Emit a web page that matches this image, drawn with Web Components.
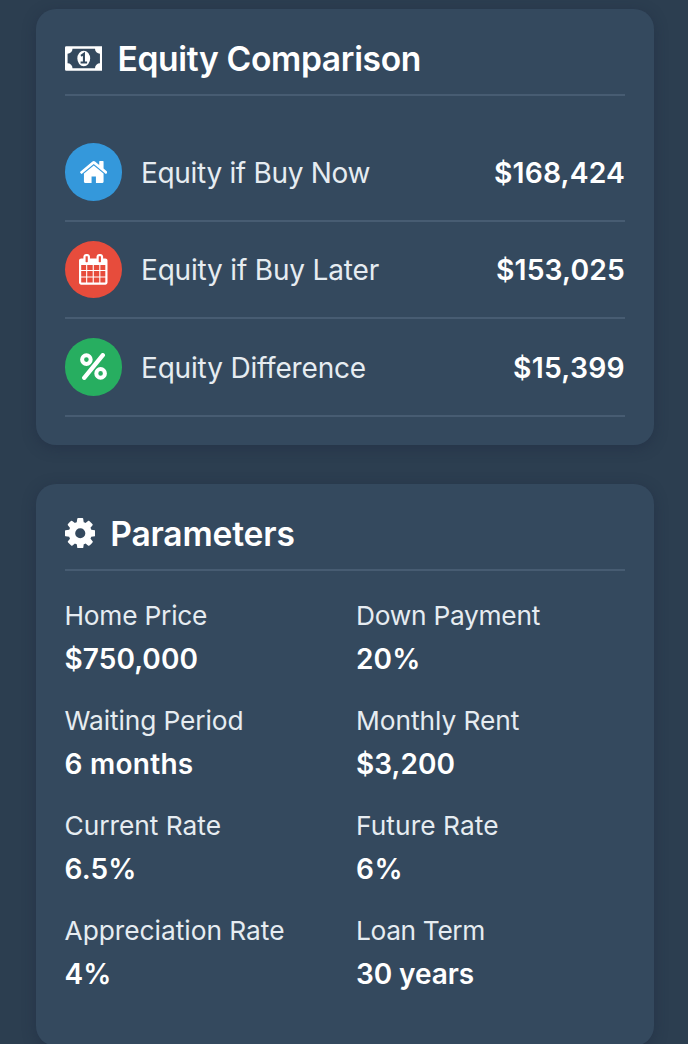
<!DOCTYPE html>
<html lang="en">
<head>
<meta charset="utf-8">
<title>Equity Comparison</title>
<style>
html{background:#2c3e50}
body{margin:0;height:1044px;overflow:hidden;background:#2c3e50;font-family:Inter,"Liberation Sans",sans-serif;color:#fff}
</style>
</head>
<body>
<equity-app></equity-app>
<script>
const ICONS = {
  money: `<svg viewBox="0 0 38 25"><path fill="currentColor" fill-rule="evenodd" d="M1.3 0H36.7Q38 0 38 1.3V23.7Q38 25 36.7 25H1.3Q0 25 0 23.7V1.3Q0 0 1.3 0ZM7.6 2.6A5 5 0 0 1 2.6 7.6V17.4A5 5 0 0 1 7.6 22.4H30.4A5 5 0 0 1 35.4 17.4V7.6A5 5 0 0 1 30.4 2.6Z"/><ellipse cx="19" cy="12.5" rx="6.5" ry="7.9" fill="currentColor"/><path d="M16.2 9.9L19.2 7.8V16.2M15.8 16.6H22.4" fill="none" stroke="#34495e" stroke-width="2.1"/></svg>`,
  cog: `<svg viewBox="128 128 1536 1536"><path fill="currentColor" d="M1152 896q0-106-75-181t-181-75-181 75-75 181 75 181 181 75 181-75 75-181zm512-109v222q0 12-8 23t-20 13l-185 28q-19 54-39 91 35 50 107 138 10 12 10 25t-9 23q-27 37-99 108t-94 71q-12 0-26-9l-138-108q-44 23-91 38-16 136-29 186-7 28-36 28h-222q-14 0-24.5-8.5t-11.5-21.5l-28-184q-49-16-90-37l-141 107q-10 9-25 9-14 0-25-11-126-114-165-168-7-10-7-23 0-12 8-23 15-21 51-66.5t54-70.5q-27-50-41-99l-183-27q-13-2-21-12.5t-8-23.5v-222q0-12 8-23t19-13l186-28q14-46 39-92-40-57-107-138-10-12-10-24 0-10 9-23 26-36 98.5-107.5t94.5-71.5q13 0 26 10l138 107q44-23 91-38 16-136 29-186 7-28 36-28h222q14 0 24.5 8.5t11.5 21.5l28 184q49 16 90 37l142-107q9-9 24-9 13 0 25 10 129 119 165 170 7 8 7 22 0 12-8 23-15 21-51 66.5t-54 70.5q26 50 41 98l183 28q13 2 21 12.5t8 23.5z"/></svg>`,
  home: `<svg viewBox="89 253 1614 1283"><path fill="currentColor" d="M1472 992v480q0 26-19 45t-45 19h-384v-384h-256v384h-384q-26 0-45-19t-19-45v-480q0-1 .5-3t.5-3l575-474 575 474q1 2 1 6zm223-69l-62 74q-8 9-21 11h-3q-13 0-21-7l-692-577-692 577q-12 8-24 7-13-2-21-11l-62-74q-8-10-7-23.5t11-21.5l719-599q32-26 76-26t76 26l244 204v-195q0-14 9-23t23-9h192q14 0 23 9t9 23v408l219 182q10 8 11 21.5t-7 23.5z"/></svg>`,
  calendar: `<svg viewBox="64 0 1664 1792"><path fill="currentColor" d="M192 1664h288v-288h-288v288zm352 0h320v-288h-320v288zm-352-352h288v-320h-288v320zm352 0h320v-320h-320v320zm-352-384h288v-288h-288v288zm736 736h320v-288h-320v288zm-384-736h320v-288h-320v288zm768 736h288v-288h-288v288zm-384-352h320v-320h-320v320zm-352-864v-288q0-13-9.5-22.5t-22.5-9.5h-64q-13 0-22.5 9.5t-9.5 22.5v288q0 13 9.5 22.5t22.5 9.5h64q13 0 22.5-9.5t9.5-22.5zm736 864h288v-320h-288v320zm-384-384h320v-288h-320v288zm384 0h288v-288h-288v288zm32-480v-288q0-13-9.5-22.5t-22.5-9.5h-64q-13 0-22.5 9.5t-9.5 22.5v288q0 13 9.5 22.5t22.5 9.5h64q13 0 22.5-9.5t9.5-22.5zm384-64v1280q0 52-38 90t-90 38h-1408q-52 0-90-38t-38-90v-1280q0-52 38-90t90-38h128v-96q0-66 47-113t113-47h64q66 0 113 47t47 113v96h384v-96q0-66 47-113t113-47h64q66 0 113 47t47 113v96h128q52 0 90 38t38 90z"/></svg>`,
  percent: `<svg viewBox="0 0 27 27"><g fill="none" stroke="currentColor"><circle cx="6.4" cy="6.6" r="4.3" stroke-width="4"/><circle cx="20.6" cy="20.4" r="4.3" stroke-width="4"/><path d="M22.8 2.2L4.2 24.8" stroke-width="4.3" stroke-linecap="round"/></g></svg>`
};

function define(name, css, html, setup) {
  customElements.define(name, class extends HTMLElement {
    connectedCallback() {
      if (this.shadowRoot) return;
      this.attachShadow({ mode: 'open' }).innerHTML =
        `<style>${css}</style>${typeof html === 'function' ? html(this) : html}`;
      if (setup) setup(this);
    }
  });
}

/* Tracks its text out or in so that it spans the given width. */
define('fit-text', ':host{display:block;white-space:nowrap}span{display:inline-block}', el => `<span>${el.getAttribute('text')}</span>`, el => {
  const s = el.shadowRoot.querySelector('span');
  const n = el.getAttribute('text').length;
  const gap = (+el.getAttribute('span') - s.getBoundingClientRect().width) / n;
  s.style.letterSpacing = gap.toFixed(3) + 'px';
});

define('ui-icon', ':host{display:block;flex:none}svg{display:block;width:100%;height:100%}', el => ICONS[el.getAttribute('name')]);

define('info-card', `
  :host{display:block;box-sizing:border-box;padding:29px 29px 0 28.5px;border-radius:20px;background:#34495e;box-shadow:0 3px 14px rgba(28,38,62,.42)}
  header{display:flex;align-items:center;height:41px;padding-bottom:15px;border-bottom:2px solid #475c72;font-size:33.6px;line-height:41px;font-weight:600}
  `, '<header><slot name="title"></slot></header><slot></slot>');

define('equity-row', `
  :host{display:flex;align-items:center;box-sizing:border-box;height:97.5px;border-bottom:2px solid #475c72}
  .badge{display:grid;place-items:center;width:57.5px;height:57.5px;border-radius:50%;background:var(--badge);flex:none;margin-right:19px}
  .label{font-size:28px;color:#e6ecf1;flex:1;padding-top:1.5px}
  .value{font-size:28.3px;font-weight:600;padding-top:1.5px}
  `, el => {
    const a = k => el.getAttribute(k);
    return `<div class="badge"><slot></slot></div>
      <fit-text class="label" text="${a('label')}" span="${a('label-span')}"></fit-text>
      <fit-text class="value" text="${a('value')}" span="${a('value-span')}"></fit-text>`;
  });

define('param-item', `
  :host{display:block;height:105px}
  .label{font-size:26.3px;line-height:36px;color:#e6ecf1}
  .value{font-size:28px;line-height:36px;font-weight:600;margin-top:7px}
  `, el => {
    const a = k => el.getAttribute(k);
    return `<fit-text class="label" text="${a('label')}" span="${a('label-span')}"></fit-text>
      <fit-text class="value" text="${a('value')}" span="${a('value-span')}"></fit-text>`;
  });

define('equity-app', `
  :host{display:flex;flex-direction:column;gap:39px;box-sizing:border-box;width:688px;padding:9px 34px 0 36px}
  .comparison{height:436px}
  .parameters{height:562px}
  .title{display:flex;align-items:center}
  .money{width:37.5px;height:25px;margin-right:15.5px;margin-top:-1px}
  .cog{width:30.5px;height:30.5px;margin-right:15.2px;margin-top:-1px}
  .home{width:27.5px;height:22px;margin-top:1px}
  .calendar{width:28.5px;height:30.7px}
  .percent{width:27px;height:27px}
  .rows{padding-top:28px}
  .grid{display:grid;grid-template-columns:291.5px 1fr;padding-top:27px}
  `, `
  <info-card class="comparison">
    <div class="title" slot="title"><ui-icon class="money" name="money"></ui-icon><fit-text text="Equity Comparison" span="303.5"></fit-text></div>
    <div class="rows">
      <equity-row style="--badge:#3498db" label="Equity if Buy Now" label-span="229" value="$168,424" value-span="131"><ui-icon class="home" name="home"></ui-icon></equity-row>
      <equity-row style="--badge:#e74c3c" label="Equity if Buy Later" label-span="238" value="$153,025" value-span="129"><ui-icon class="calendar" name="calendar"></ui-icon></equity-row>
      <equity-row style="--badge:#27ae60" label="Equity Difference" label-span="225" value="$15,399" value-span="112"><ui-icon class="percent" name="percent"></ui-icon></equity-row>
    </div>
  </info-card>
  <info-card class="parameters">
    <div class="title" slot="title"><ui-icon class="cog" name="cog"></ui-icon><fit-text text="Parameters" span="184.5"></fit-text></div>
    <div class="grid">
      <param-item label="Home Price" label-span="142.7" value="$750,000" value-span="133.5"></param-item>
      <param-item label="Down Payment" label-span="184" value="20%" value-span="64.5"></param-item>
      <param-item label="Waiting Period" label-span="179" value="6 months" value-span="129"></param-item>
      <param-item label="Monthly Rent" label-span="163.3" value="$3,200" value-span="99"></param-item>
      <param-item label="Current Rate" label-span="156.5" value="6.5%" value-span="72"></param-item>
      <param-item label="Future Rate" label-span="142.7" value="6%" value-span="47"></param-item>
      <param-item label="Appreciation Rate" label-span="220" value="4%" value-span="47"></param-item>
      <param-item label="Loan Term" label-span="129" value="30 years" value-span="118"></param-item>
    </div>
  </info-card>`);
</script>
</body>
</html>
